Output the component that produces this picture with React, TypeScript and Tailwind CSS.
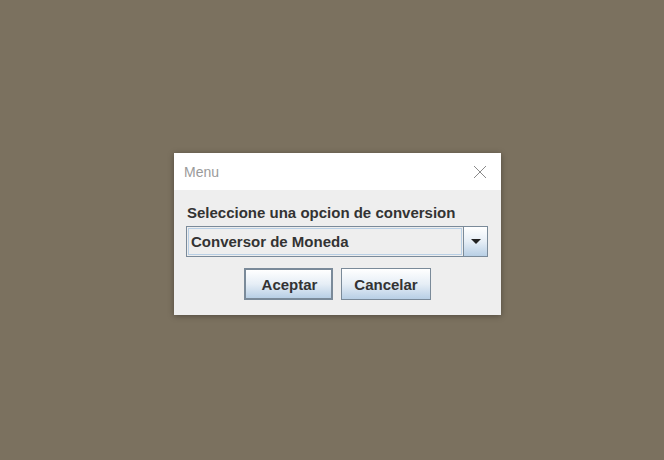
import React from "react";

const font = { fontFamily: '"Liberation Sans", Arial, sans-serif' };

const MetalButton = ({ label, isDefault }: { label: string; isDefault?: boolean }) => {
  return (
    <button
      className={
        isDefault
          ? "w-[89px] h-[32px] pt-[3px] pl-[2px] border-2 border-[#7a8a99] bg-gradient-to-b from-white via-[#e6eef6] to-[#b8cfe5] text-[15px] font-bold text-[#333333]"
          : "w-[90px] h-[32px] pt-[3px] border border-[#7a8a99] bg-gradient-to-b from-white via-[#e6eef6] to-[#b8cfe5] text-[15px] font-bold text-[#333333]"
      }
    >
      {label}
    </button>
  );
};

export default function App() {
  return (
    <div className="w-[664px] h-[460px] bg-[#7b715f] pl-[174px] pt-[153px]" style={font}>
      <div className="w-[327px] h-[162px] flex flex-col shadow-[0_1px_6px_rgba(0,0,0,0.35)]">
        {/* Title bar */}
        <div className="h-[37px] bg-white flex items-center justify-between pl-[10px] pr-[14px]">
          <span className="text-[14px] pt-[2px] text-[#9a9a9a]">Menu</span>
          <svg width="14" height="14" viewBox="0 0 14 14">
            <path d="M1 1 L13 13 M13 1 L1 13" stroke="#8a8a8a" strokeWidth="1" fill="none" />
          </svg>
        </div>

        {/* Body */}
        <div className="flex-1 bg-[#eeeeee] flex flex-col pl-[12px] pr-[13px] pt-[14px]">
          <div className="pl-px text-[15px] leading-[18px] font-bold text-[#333333]">
            Seleccione una opcion de conversion
          </div>

          {/* Combo box */}
          <div className="mt-[4px] h-[31px] border border-[#7a8a99] flex">
            <div className="flex-1 m-px border border-[#b8cfe5] flex items-center pl-[2px] pt-px text-[15px] font-bold text-[#333333]">
              Conversor de Moneda
            </div>
            <div className="w-[24px] border-l border-[#7a8a99] bg-gradient-to-b from-white via-[#e6eef6] to-[#b8cfe5] flex items-center justify-center">
              <svg width="10" height="5" viewBox="0 0 10 5">
                <path d="M0 0 L10 0 L5 5 Z" fill="#222222" />
              </svg>
            </div>
          </div>

          {/* Buttons */}
          <div className="mt-[11px] flex justify-center gap-[8px] pl-px">
            <MetalButton label="Aceptar" isDefault />
            <MetalButton label="Cancelar" />
          </div>
        </div>
      </div>
    </div>
  );
}
